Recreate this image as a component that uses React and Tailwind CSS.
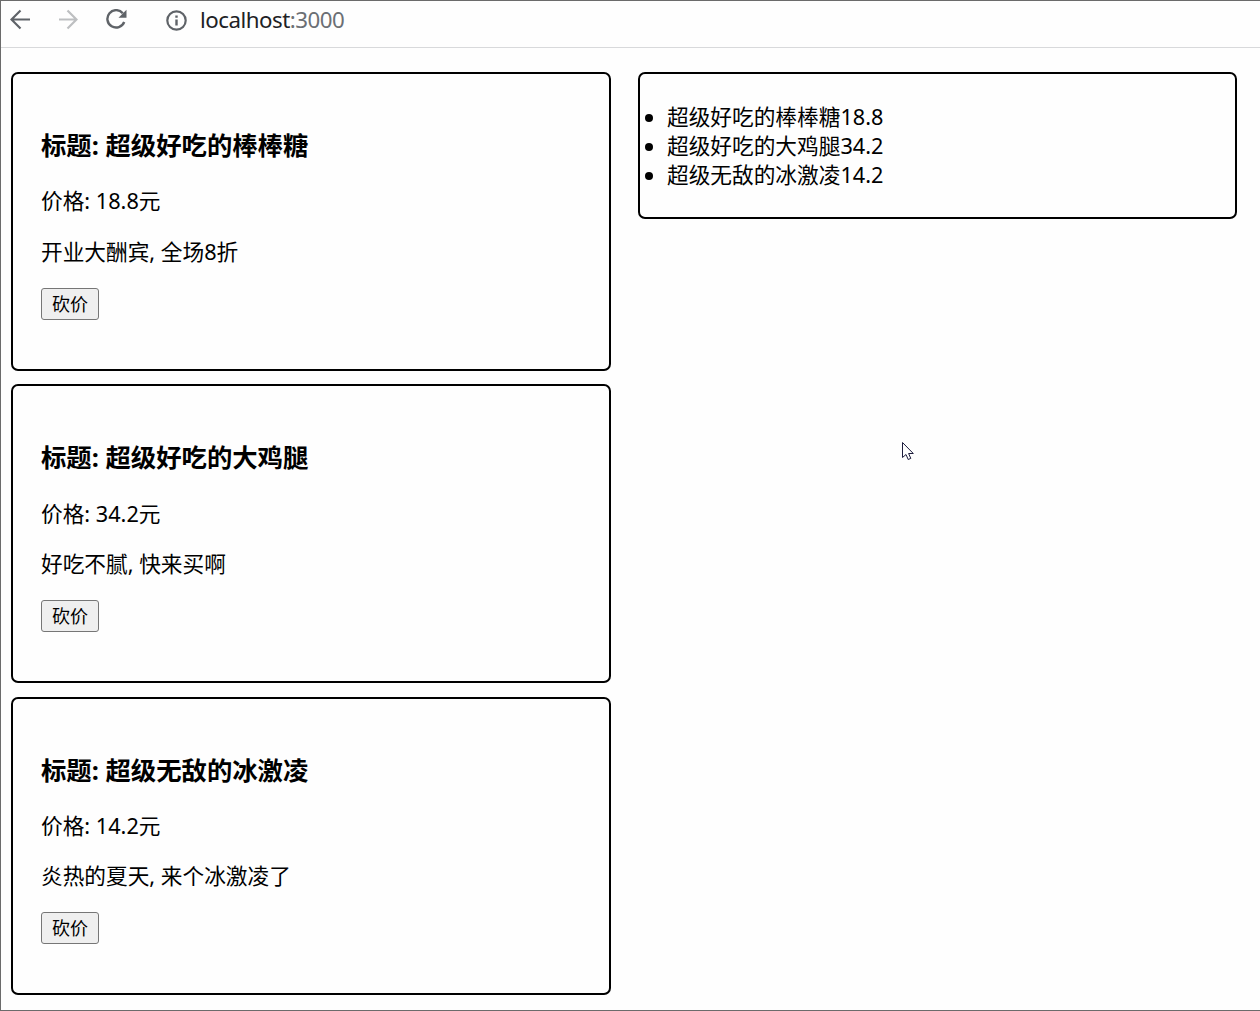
const products = [
  { id: 1, title: '超级好吃的棒棒糖', price: '18.8', desc: '开业大酬宾, 全场8折' },
  { id: 2, title: '超级好吃的大鸡腿', price: '34.2', desc: '好吃不腻, 快来买啊' },
  { id: 3, title: '超级无敌的冰激凌', price: '14.2', desc: '炎热的夏天, 来个冰激凌了' },
];

function Toolbar() {
  return (
    <header className="flex h-[47px] items-start border-b border-[#d8d9db] pl-[9px]">
      <svg className="mt-[8px] h-[21px] w-[21px]" viewBox="0 0 21 21" fill="none" stroke="#5f6368" strokeWidth="2.2">
        <path d="M20 10.5H2M10.5 1.5l-9 9 9 9" />
      </svg>
      <svg className="mt-[8px] ml-[26px] h-[21px] w-[21px]" viewBox="0 0 21 21" fill="none" stroke="#bdbfc1" strokeWidth="2.2">
        <path d="M2 10.5h17M10.5 1.5l9 9-9 9" />
      </svg>
      <svg className="mt-[8px] ml-[27px] h-[21px] w-[22px]" viewBox="0 0 22 21" fill="none">
        <path d="M17.8 4.3A8.7 8.7 0 1 0 19.2 13" stroke="#5f6368" strokeWidth="2.4" />
        <path d="M21.5.8v8h-8z" fill="#5f6368" />
      </svg>
      <svg className="mt-[9px] ml-[39px] h-[21px] w-[21px]" viewBox="0 0 21 21" fill="none">
        <circle cx="10.5" cy="10.5" r="9.2" stroke="#5f6368" strokeWidth="2.2" />
        <path d="M9.3 9.5h2.4v6H9.3zM9.3 5.5h2.4v2.2H9.3z" fill="#5f6368" />
      </svg>
      <div className="mt-[4px] ml-[13px] text-[22.3px] leading-[30px] tracking-[-0.5px] text-[#202124]">
        localhost<span className="text-[#6b6f74]">:3000</span>
      </div>
    </header>
  );
}

function ProductCard({ title, price, desc }) {
  return (
    <article className="h-[298.6px] rounded-[7px] border-2 border-black pt-[55px] pl-[28px]">
      <h3 className="h-[33px] text-[25.37px] leading-[33px] font-bold">标题: {title}</h3>
      <p className="mt-[24.2px] h-[29px] leading-[29px]">价格: {price}元</p>
      <p className="mt-[21.4px] h-[29px] leading-[29px]">{desc}</p>
      <button className="mt-[22px] flex h-[32px] w-[58px] items-center justify-center rounded-[3px] border border-[#767676] bg-[#efefef] text-[18px] leading-[24px]">
        砍价
      </button>
    </article>
  );
}

export default function App() {
  return (
    <div className="relative h-[1011px] w-[1260px] overflow-hidden border-y border-l border-[#6b6b6b] bg-[#fefefe] font-['Noto_Sans','Noto_Sans_CJK_SC',sans-serif] text-[21.68px] text-black">
      <Toolbar />
      <main className="flex items-start gap-[27px] pt-[24px] pl-[10px]">
        <section className="flex w-[600px] flex-col gap-[13.8px]">
          {products.map((p) => (
            <ProductCard key={p.id} {...p} />
          ))}
        </section>
        <aside className="h-[147px] w-[599px] rounded-[7px] border-2 border-black pt-[28px] pl-[5px]">
          <ul>
            {products.map((p) => (
              <li key={p.id} className="flex h-[29px] items-center leading-[29px]">
                <span className="mt-[3px] mr-[14px] h-[8px] w-[8px] rounded-full bg-black" />
                {p.title}
                {p.price}
              </li>
            ))}
          </ul>
        </aside>
      </main>
      <svg className="absolute top-[440px] left-[900px] h-[21px] w-[14px]" viewBox="0 0 14 21">
        <path d="M1.5 1.5v15l3.5-3 2.2 5 2.6-1.1-2.2-4.9h4.7z" fill="#fff" stroke="#1c1c3c" strokeWidth="1" />
      </svg>
    </div>
  );
}
